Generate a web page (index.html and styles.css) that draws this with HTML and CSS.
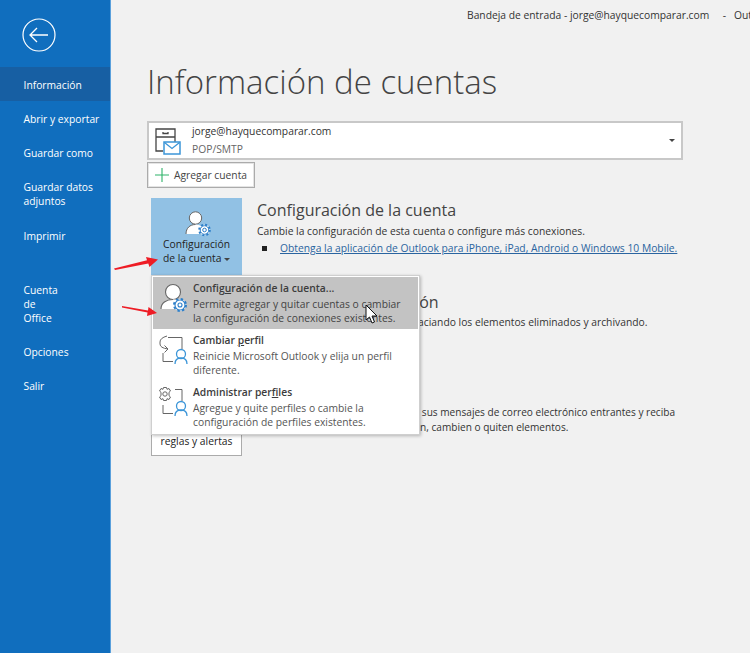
FILE: index.html
```html
<!DOCTYPE html>
<html lang="es">
<head>
<meta charset="utf-8">
<title>Información de cuentas</title>
<link rel="stylesheet" href="styles.css">
</head>
<body>
<div class="app">
  <nav class="sidebar">
    <div class="back">
      <svg width="34" height="34" viewBox="0 0 34 34" fill="none" stroke="#fff"><circle cx="17" cy="17" r="16" stroke-width="1.2"/><path d="M26 17H8M15 10l-7 7 7 7" stroke-width="1.3"/></svg>
    </div>
    <ul class="nav">
      <li class="nav-item active">Información</li>
      <li class="nav-item">Abrir y exportar</li>
      <li class="nav-item">Guardar como</li>
      <li class="nav-item tall">Guardar datos<br>adjuntos</li>
      <li class="nav-item">Imprimir</li>
      <li class="nav-item spaced">Cuenta<br>de<br>Office</li>
      <li class="nav-item">Opciones</li>
      <li class="nav-item">Salir</li>
    </ul>
  </nav>
  <main class="main">
    <div class="titlebar">Bandeja de entrada - jorge@hayquecomparar.com &nbsp; &nbsp;&nbsp;- &nbsp; Outlook</div>
    <h1 class="title">Información de cuentas</h1>
    <div class="account">
      <svg class="account-icon" width="26" height="28" viewBox="0 0 26 28" fill="none">
        <path d="M1 21V2h19v13M1 10h19M8 5v1.500h5V5M1 21v3h7" stroke="#444" stroke-width="1.300"/>
        <rect x="9" y="15" width="16" height="12" fill="#fff" stroke="#3b95d8" stroke-width="1.500"/>
        <path d="M9.500 15.500l7.500 6 7.500-6" stroke="#3b95d8" stroke-width="1.300"/>
      </svg>
      <div class="account-text">
        <div>jorge@hayquecomparar.com</div>
        <div class="account-type">POP/SMTP</div>
      </div>
      <span class="caret"></span>
    </div>
    <button class="add">
      <svg width="14" height="14" viewBox="0 0 14 14" stroke="#2fb36a" stroke-width="1.100"><path d="M7 0v14M0 7h14"/></svg>
      <span>Agregar cuenta</span>
    </button>
    <section class="row row-one">
      <div class="tile tile-on">
        <svg width="28" height="28" viewBox="0 0 28 28" fill="none">
          <circle cx="11.500" cy="8" r="6.200" fill="#fff" stroke="#666" stroke-width="1"/>
          <path d="M2 24c0-6 4-9.500 9.500-9.500 3 0 5 1 6 2v7.500z" fill="#fff"/>
          <path d="M2 24c0-6 4-9.500 9.500-9.500" stroke="#666" stroke-width="1"/>
          <circle cx="20.500" cy="20" r="5.300" fill="#fff" stroke="#2d7fc9" stroke-width="2" stroke-dasharray="2 2.160"/>
          <circle cx="20.500" cy="20" r="4.300" stroke="#2d7fc9" stroke-width="1"/>
          <circle cx="20.500" cy="20" r="1.800" stroke="#2d7fc9" stroke-width="1"/>
        </svg>
        <div class="tile-label">Configuración<br>de la cuenta <span class="mini-caret"></span></div>
      </div>
      <div class="row-text">
        <h2>Configuración de la cuenta</h2>
        <p>Cambie la configuración de esta cuenta o configure más conexiones.</p>
        <p class="bullet"><i></i><a href="#">Obtenga la aplicación de Outlook para iPhone, iPad, Android o Windows 10 Mobile.</a></p>
      </div>
    </section>
    <section class="row row-two">
      <div class="tile-blank"></div>
      <div class="row-text">
        <h2>Configuración del buzón</h2>
        <p>Administre el tamaño del buzón vaciando los elementos eliminados y archivando.</p>
      </div>
    </section>
    <section class="row row-three">
      <div class="tile tile-off">
        <div class="tile-label">Administrar<br>reglas y alertas</div>
      </div>
      <div class="row-text">
        <p class="rule-copy">Use reglas y alertas para organizar sus mensajes de correo electrónico entrantes y reciba<br>actualizaciones cuando se agreguen, cambien o quiten elementos.</p>
      </div>
    </section>
  </main>

  <div class="menu">
    <div class="menu-item hot">
      <svg width="32" height="32" viewBox="0 0 32 32" fill="none">
        <circle cx="16" cy="9" r="7.500" fill="#fff" stroke="#666" stroke-width="1.100"/>
        <path d="M4 26c0-6 5-9.500 12-9.500 3 0 5 .5 7 2v7.500z" fill="#fff"/>
        <path d="M4 26c0-6 5-9.500 12-9.500" stroke="#666" stroke-width="1.100"/>
        <circle cx="23" cy="22" r="6" fill="#fff" stroke="#2d7fc9" stroke-width="2" stroke-dasharray="2.400 2.310"/>
        <circle cx="23" cy="22" r="5" stroke="#2d7fc9" stroke-width="1.100"/>
        <circle cx="23" cy="22" r="2" stroke="#2d7fc9" stroke-width="1.100"/>
      </svg>
      <div class="menu-text"><b>Config<u>u</u>ración de la cuenta...</b><span>Permite agregar y quitar cuentas o cambiar<br>la configuración de conexiones existentes.</span></div>
    </div>
    <div class="menu-item">
      <svg width="32" height="32" viewBox="0 0 32 32" fill="none">
        <path d="M11 2.500h14V14M6 18v8.500h10" stroke="#666" stroke-width="1"/>
        <path d="M10 1Q3 3 3 7v2q0 4 8 5M7.500 10.500L11 14l-3.500 3.500" stroke="#666" stroke-width="1"/>
        <circle cx="24" cy="19" r="4.500" stroke="#3b95d8" stroke-width="1.300"/>
        <path d="M18 29c0-4 2.500-6 6-6s6 2 6 6" stroke="#3b95d8" stroke-width="1.300"/>
      </svg>
      <div class="menu-text"><b>Cambiar <u>p</u>erfil</b><span>Reinicie Microsoft Outlook y elija un perfil<br>diferente.</span></div>
    </div>
    <div class="menu-item">
      <svg width="32" height="32" viewBox="0 0 32 32" fill="none">
        <path d="M18 2.500h7V14M6 18v8.500h10" stroke="#666" stroke-width="1"/>
        <circle cx="8" cy="7" r="2.200" stroke="#666" stroke-width="1"/>
        <path d="M6.500.5h3l.5 1.800 2-.8 1.500 2.500-1.500 1.300v3.400l1.500 1.300-1.500 2.500-2-.8-.5 1.800h-3l-.5-1.800-2 .8-1.500-2.500L4 8.700V5.300L2.500 4 4 1.500l2 .8z" stroke="#666" stroke-width="1"/>
        <circle cx="24" cy="19" r="4.500" stroke="#3b95d8" stroke-width="1.300"/>
        <path d="M18 29c0-4 2.500-6 6-6s6 2 6 6" stroke="#3b95d8" stroke-width="1.300"/>
      </svg>
      <div class="menu-text"><b>Administrar per<u>f</u>iles</b><span>Agregue y quite perfiles o cambie la<br>configuración de perfiles existentes.</span></div>
    </div>
  </div>

  <svg class="arrow arrow-a" width="46" height="16" viewBox="0 0 46 16"><path d="M1 13.500L34 5.200 33 2l12 2.500-8.500 7.500-1.200-3.500L2 15z" fill="#ee1c25"/></svg>
  <svg class="arrow arrow-b" width="36" height="12" viewBox="0 0 36 12"><path d="M0 1l26 4.500L26.500 2 35 8l-10 3 .5-3.500L0 2.500z" fill="#ee1c25"/></svg>
  <svg class="pointer" width="13" height="20" viewBox="0 0 13 20"><path d="M1 1v15l3.500-3 2.500 6 2.500-1-2.500-6H12z" fill="#fff" stroke="#111" stroke-width="1"/></svg>
</div>
</body>
</html>
```

FILE: styles.css
```css
* { box-sizing: border-box; }
html, body { margin: 0; height: 100%; overflow: hidden; }
body { font-family: "Open Sans", "Noto Sans", sans-serif; font-size: 10.3px; color: #333; background: #f1f1f1; }
.app { position: relative; display: flex; width: 750px; height: 653px; overflow: hidden; }

.sidebar { flex: 0 0 111px; background: #106ebe; color: #fff; border-right: 1px solid #5aa0dc; }
.back { height: 67px; padding: 18px 0 0 22px; }
.back svg { display: block; }
.nav { list-style: none; margin: 0; padding: 0; }
.nav-item { padding: 11px 0 9px 23.500px; line-height: 14px; }
.nav-item.tall { padding-bottom: 10px; }
.nav-item.active { background: #175fa3; }
.nav-item.spaced { margin-top: 20px; }

.main { flex: 1; min-width: 0; padding-left: 36px; }
.titlebar { height: 27px; padding: 8px 0 0 320px; line-height: 14px; white-space: nowrap; color: #333; }
.title { margin: 30px 0 0; height: 64px; font-size: 33px; line-height: 50px; font-weight: 300; color: #444; white-space: nowrap; }

.account { display: flex; align-items: center; width: 536px; height: 39px; background: #fff; border: 2px solid #c8c8c8; padding: 0 6px 0 6px; }
.account-icon { flex: none; }
.account-text { margin-left: 11px; flex: 1; line-height: 18px; margin-top: -2px; }
.account-type { color: #666; }
.caret { border: 3px solid transparent; border-top: 3px solid #444; border-bottom: 0; margin-right: 0; }

.add { display: flex; align-items: center; gap: 5px; margin-top: 2px; width: 108px; height: 26px; padding: 0 0 0 7px; background: #fff; border: 1px solid #ababab; outline: 1px solid #e4e4e4; outline-offset: -2px; font: inherit; color: #444; }

.row { display: flex; gap: 15px; margin-left: 4px; }
.row-one { margin-top: 10px; height: 78px; }
.row-two { margin-top: 14px; height: 103px; }
.row-three { height: 63px; }
.tile { flex: 0 0 91px; display: flex; flex-direction: column; align-items: center; text-align: center; line-height: 14px; color: #222; }
.tile-blank { flex: 0 0 91px; }
.tile-on { background: #91c1e4; padding-top: 12px; }
.tile-on svg { margin-left: 2px; flex: none; margin-bottom: -1px; }
.tile-off { background: #fff; border: 1px solid #ababab; justify-content: flex-end; padding-bottom: 7px; }
.mini-caret { display: inline-block; vertical-align: middle; width: 0; height: 0; border-left: 3px solid transparent; border-right: 3px solid transparent; border-top: 3px solid #444; }
.row-text h2 { margin: 0 0 2px; font-size: 16px; line-height: 24px; font-weight: 400; color: #444; white-space: nowrap; }
.row-two .row-text h2 { margin-bottom: 1px; }
.row-text p { margin: 0; line-height: 15px; color: #333; white-space: nowrap; }
.row-text .bullet { display: flex; align-items: center; margin-top: 2px; padding-left: 5px; }
.bullet i { width: 5px; height: 5px; background: #222; margin-right: 13px; }
.bullet a { color: #2a64a0; }
.row-text .rule-copy { padding-top: 12px; font-size: 10.1px; }

.menu { position: absolute; left: 151px; top: 275px; width: 269px; height: 160px; padding: 1px; background: #fff; border: 1px solid #cfcfcf; box-shadow: 1px 1px 3px rgba(0,0,0,.25); }
.menu-item { display: flex; height: 52px; padding: 4px 0 0 4px; gap: 4px; }
.menu-item svg { flex: none; margin-top: 2px; }
.menu-item.hot { background: #c3c3c3; }
.menu-text { line-height: 14px; color: #555; white-space: nowrap; }
.menu-text b { display: block; color: #3c3c3c; font-weight: 600; margin-bottom: 2px; }
.menu-text span { display: block; }
.hot .menu-text { color: #444; }

.arrow { position: absolute; }
.arrow-a { left: 113px; top: 255px; }
.arrow-b { left: 122px; top: 305px; }
.pointer { position: absolute; left: 365px; top: 304px; }
```
